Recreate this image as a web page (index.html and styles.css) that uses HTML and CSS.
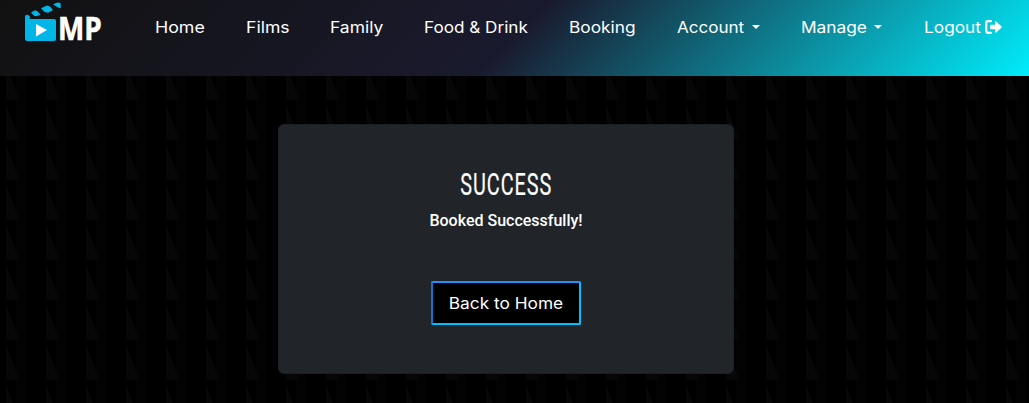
FILE: index.html
```
<!DOCTYPE html>
<html lang="en">
<head>
<meta charset="utf-8">
<title>MP</title>
<link rel="stylesheet" href="styles.css">
</head>
<body>
<header class="navbar">
  <a class="brand">
    <svg width="34" height="44" viewBox="24 0 34 44">
      <path fill="#00b5e8" d="M25 16.500q.3-1.500 2-1.800 3 .6 3 2.800l-.5 1.500H54q2 0 2 2v18q0 2-2 2H27q-2 0-2-2zM31 12.500l4-2.300 2.500 1 3 3.600-4 1.500-2.500-.5zM41 8.300l6-2.800 3 1 3 3.500-5 2.800-3.500-.8zM53 4.200l4.500-1.700L60.500 3q.5 2.500 0 5.300l-2.500-.8z"/>
      <path fill="#fff" d="M36 24l11 6-11 6.500z"/>
    </svg>
    <span class="brand-text">MP</span>
  </a>
  <nav class="links">
    <a class="link home"><span class="label">Home</span></a>
    <a class="link films"><span class="label">Films</span></a>
    <a class="link family"><span class="label">Family</span></a>
    <a class="link food"><span class="label">Food &amp; Drink</span></a>
    <a class="link booking"><span class="label">Booking</span></a>
    <a class="link account"><span class="label">Account</span><i class="caret"></i></a>
    <a class="link manage"><span class="label">Manage</span><i class="caret"></i></a>
    <a class="link logout"><span class="label">Logout</span><svg class="exit" width="17" height="14" viewBox="0 0 17 14"><path d="M6 1.200H3.200Q1.200 1.200 1.200 3.200v7.600q0 2 2 2H6" fill="none" stroke="#fff" stroke-width="2.200" stroke-linecap="round"/><path d="M6 4.800h4V2.200q0-1.600 1.200-.8l5.200 4.900q.6.700 0 1.400L11.200 12.600q-1.200.8-1.200-.8V9.200H6q-.8 0-.8-.8V5.600Q5.200 4.800 6 4.800z" fill="#fff"/></svg></a>
  </nav>
</header>
<main class="page">
  <section class="card">
    <h1 class="title">SUCCESS</h1>
    <p class="message">Booked Successfully!</p>
    <a class="button"><span class="button-label">Back to Home</span></a>
  </section>
</main>
</body>
</html>
```
FILE: styles.css
```
* { box-sizing: border-box; }
body {
  margin: 0;
  height: 403px;
  overflow: hidden;
  background: #000 url("data:image/svg+xml,%3Csvg xmlns='http://www.w3.org/2000/svg' width='40' height='40'%3E%3Cpath fill='%23030303' d='M16 0h10v40H16z'/%3E%3Cpath fill='%23070707' d='M6 4L19 40H6z'/%3E%3C/svg%3E") 0 -20px;
  color: #fff;
}
.navbar {
  display: flex;
  height: 76px;
  padding-left: 24px;
  background: linear-gradient(135deg, #111 0%, #1a1a2e 50%, #00ecfb 100%);
}
.brand { display: flex; width: 131px; height: 54px; }
.brand svg { display: block; flex: none; overflow: visible; }
.brand-text {
  padding-top: 6px;
  font: 700 32px/44px "Open Sans", sans-serif;
  -webkit-text-stroke: .6px #fff;
  transform: scaleX(.87);
  transform-origin: left;
}
.links { display: flex; height: 54px; align-items: center; }
.link {
  display: flex;
  align-items: center;
  font: 400 16px/24px Inter, sans-serif;
  white-space: nowrap;
}
.label { transform: scaleX(1.08); transform-origin: left; }
.home { width: 91px; }
.home .label { transform: scaleX(1.11); }
.films { width: 84px; }
.films .label { transform: scaleX(1.1); }
.family { width: 94px; }
.family .label { transform: scaleX(1.09); }
.food { width: 145px; }
.food .label { transform: scaleX(1.07); }
.booking { width: 108px; }
.account { width: 124px; }
.account .label { transform: scaleX(1.065); }
.manage { width: 123px; }
.caret {
  margin-left: 12px;
  border: 4.500px solid transparent;
  border-top-color: #fff;
  border-bottom: 0;
}
.exit { margin-left: 8px; }
.page { padding: 48px 0 0 278px; }
.card {
  display: flex;
  flex-direction: column;
  align-items: center;
  width: 456px;
  height: 250px;
  padding-top: 40px;
  background: #212529;
  border: 1px solid #1c2023;
  border-radius: 6px;
}
.title {
  margin: 0;
  font: 400 32px/38px Roboto, sans-serif;
  letter-spacing: 1.500px;
  text-indent: 1.500px;
  -webkit-text-stroke: .2px #fff;
  transform: scaleX(.62);
}
.message {
  margin: 6px 0 0;
  font: 500 16px/24px Roboto, sans-serif;
}
.button {
  display: flex;
  align-items: center;
  justify-content: center;
  width: 150px;
  height: 44px;
  margin-top: 48px;
  background: #000;
  border: 2px solid #00bfff;
  border-top-color: #1e90ff;
  border-left-color: #0878d0;
  border-radius: 2px;
}
.button-label {
  font: 400 16px/24px Inter, sans-serif;
  white-space: nowrap;
  transform: scaleX(1.08);
}
```
